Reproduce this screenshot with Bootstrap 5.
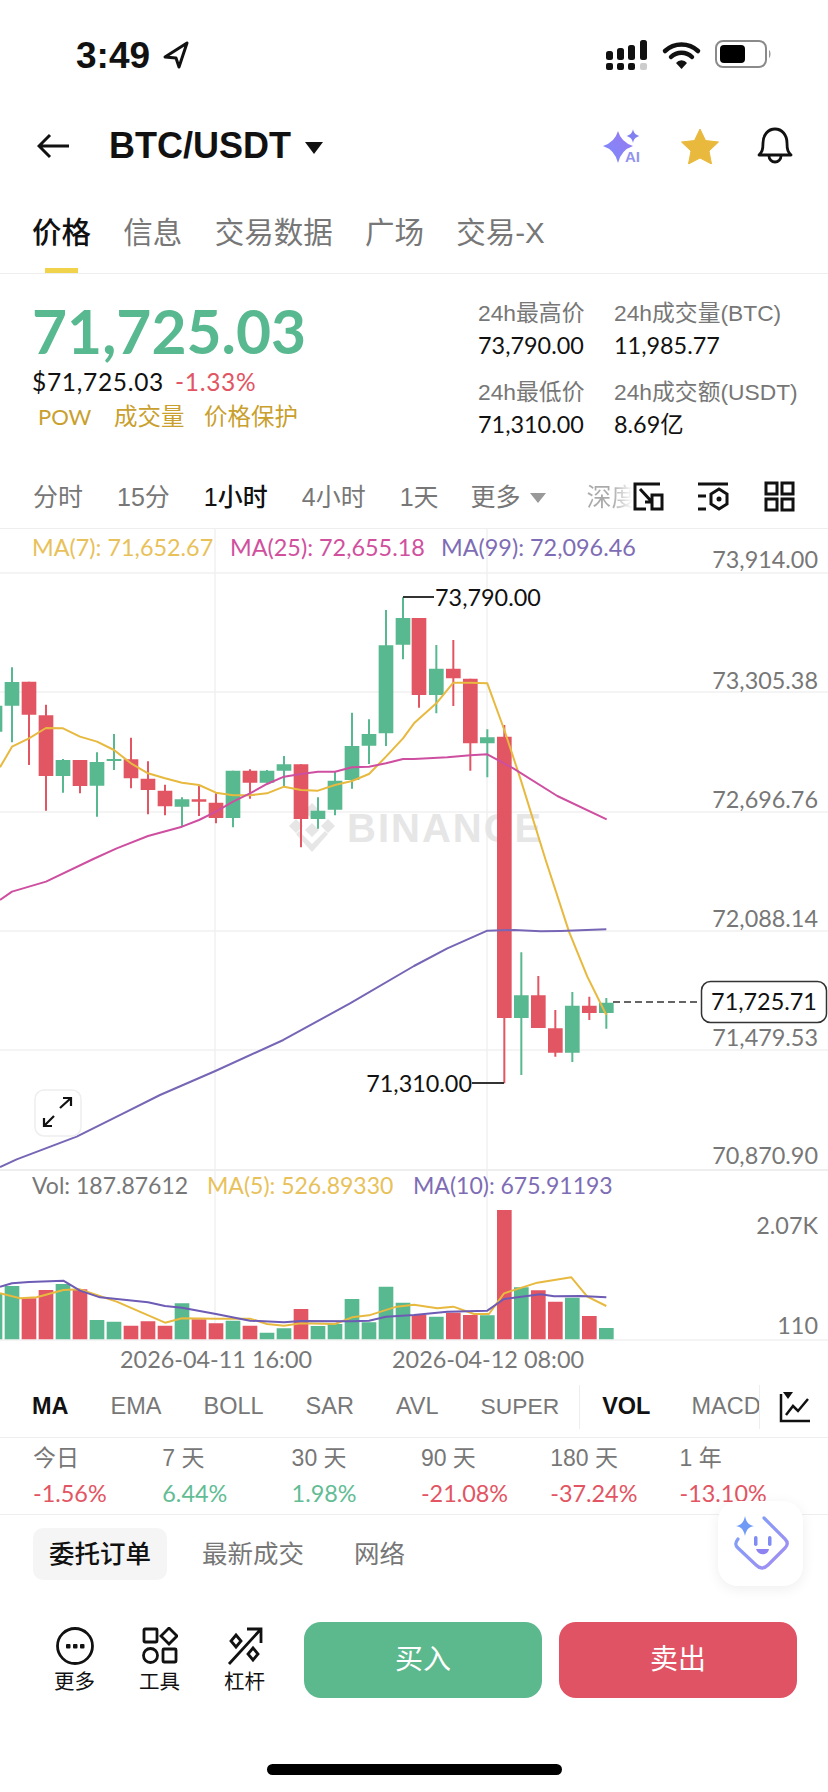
<!DOCTYPE html>
<html lang="zh-CN">
<head>
<meta charset="utf-8">
<title>BTC/USDT</title>
<link href="https://cdn.jsdelivr.net/npm/bootstrap@5.3.0/dist/css/bootstrap.min.css" rel="stylesheet">
<style>
html,body{margin:0;background:#fff}
body{font-family:"Liberation Sans","Noto Sans CJK SC",sans-serif;color:#111}
.phone{position:relative;width:828px;height:1792px;overflow:hidden;background:#fff}
.num{font-family:Lato,"Noto Sans CJK SC",sans-serif}
.sbar{height:110px;padding:0 57px 0 76px}
.clock{font-size:37px;font-weight:700;line-height:1;font-family:"Liberation Sans",sans-serif}
.locarrow{margin-left:12px}
.topbar{height:72px;padding:0 35px 0 37px}
.pair{font-size:36px;font-weight:700;line-height:1;margin-left:40px}
.caret{margin:4px 0 0 13px}
.mtabs{height:92px;padding:31px 0 0 32px;gap:32.300px;border-bottom:1px solid #eee}
.mtab{position:relative;font-size:29.500px;line-height:40px;color:#777}
.mtab.on{color:#111;font-weight:500}
.mtab.on::after{content:"";position:absolute;left:13px;width:33px;height:5px;bottom:0;background:#F0D24B}
.summ{height:178px;padding:0 0 0 33px}
.bigp{font-size:60.500px;font-weight:700;line-height:58px;color:#58B88F;margin:28px 0 0 -1px}
.subp{font-size:24.500px;line-height:30px;margin-top:7px;letter-spacing:.7px;margin-left:-1px}
.dn{color:#E25563}
.up{color:#62BC94}
.tags{font-size:23.500px;line-height:30px;margin-top:5px;padding-left:5px;color:#C99F2E}
.tag1{font-size:22px;width:76px}
.tag2{width:90px}
.stats{margin-left:auto;width:350px;padding-top:24px}
.stats>div{flex:0 0 auto}
.c1{width:136px}
.lbl{font-size:22.800px;line-height:30px;color:#777;white-space:nowrap}
.val{font-size:23.400px;line-height:30px;color:#111;margin-top:2px;white-space:nowrap}
.lbl.r2{margin-top:17px}
.ivals{height:77px;padding:27px 0 0 33px;border-bottom:1px solid #eee;position:relative}
.ivs{gap:34px;font-size:25px;line-height:36px;color:#777;width:606px;overflow:hidden;white-space:nowrap}
.ivs .on{color:#111;font-weight:500}
.more{margin-left:-2px}
.fadetxt{background:linear-gradient(90deg,#aaa 50%,#fff 92%);-webkit-background-clip:text;background-clip:text;color:transparent;margin-left:7px}
.tri{display:inline-block;width:0;height:0;border-left:8px solid transparent;border-right:8px solid transparent;border-top:10px solid #999;margin:0 0 3px 9px}
.ivic{position:absolute;left:0;top:0;width:828px;height:77px;pointer-events:none}
.chart{display:block;width:828px;height:843px}
.chart text{font-family:Lato,"Noto Sans CJK SC",sans-serif;font-size:23.400px}
.chart .volleg text{font-size:23px}
.inds{height:66px;padding:4px 0 0 32px;border-bottom:1px solid #eee;font-size:23.500px;color:#777;white-space:nowrap}
.inds b{color:#111;font-weight:700}
.igrp{gap:42px}
.sup{font-size:22.800px}
.ivs2{width:68px;overflow:hidden;margin-left:41px}
.vsep{width:1px;height:44px;background:#eee}
.vsep.first{margin:0 22px 0 20px}
.iconsel{margin-left:19px}
.perf{height:77px;padding:5px 0 0 33px;border-bottom:1px solid #eee}
.perf>div{width:129.300px}
.plbl{font-size:23px;line-height:30px;color:#777}
.pval{font-size:23.400px;line-height:30px;margin-top:5px}
.ttabs{padding:13px 0 0 33px;gap:35px}
.ttab{font-size:25.500px;line-height:52px;color:#777}
.ttab.on{background:#F5F5F5;color:#111;border-radius:10px;padding:0 16px;font-weight:500}
.ttab.net{margin-left:15px}
.bott{margin-top:42px;height:76px}
.tool{width:85px;font-size:20.500px;line-height:26px;color:#111;text-align:center}
.tool svg{display:block;margin:5px auto 4px}
.tools{padding-left:32px;width:304px}
.act{width:238px;height:76px;border:0;border-radius:17px;color:#fff;font-size:28px;padding:0;line-height:1}
.act.buy{background:#5CB88D}
.act.sell{background:#E05364;margin-left:17px}
.act.buy:hover{background:#5CB88D;color:#fff}
.act.sell:hover{background:#E05364;color:#fff}
.hbar{width:295px;height:11px;border-radius:6px;background:#000;margin:66px 0 0 267px}
.aibtn{position:absolute;left:718px;top:1501px;width:85px;height:85px;border-radius:20px;background:#fff;box-shadow:0 3px 14px rgba(0,0,0,.07)}
</style>
</head>
<body>
<div class="phone d-flex flex-column">

<div class="sbar d-flex align-items-center">
  <span class="clock">3:49</span>
  <svg class="locarrow" width="30" height="30" viewBox="0 0 30 30"><path d="M25 3 3 17l11 1 3 9z" fill="none" stroke="#111" stroke-width="3" stroke-linejoin="round"/></svg>
  <svg class="ms-auto" width="165" height="32" viewBox="0 0 165 32">
    <g fill="#111"><rect x="0" y="12" width="7" height="9" rx="2.500"/><rect x="11" y="9" width="7" height="12" rx="2.500"/><rect x="22" y="6" width="7" height="15" rx="2.500"/><rect x="34" y="1" width="7" height="20" rx="2.500"/>
    <rect x="0" y="24" width="7" height="7" rx="2"/><rect x="11" y="24" width="7" height="7" rx="2"/><rect x="22" y="24" width="7" height="7" rx="2"/></g><rect x="34" y="24" width="7" height="7" rx="2" fill="#ccc"/>
    <path d="M59 12a24 24 0 0 1 33 0M65 18a15 15 0 0 1 21 0" fill="none" stroke="#111" stroke-width="4.500" stroke-linecap="round"/><path d="M70 24a7 7 0 0 1 11 0l-5.500 6z" fill="#111"/>
    <rect x="110" y="2" width="50" height="26" rx="7" fill="none" stroke="#8a8a8a" stroke-width="2"/><rect x="114" y="6" width="25" height="18" rx="4" fill="#000"/><path d="M163 11c2 1 2 7 0 8z" fill="#999"/>
  </svg>
</div>

<div class="topbar d-flex align-items-center">
  <svg width="32" height="26" viewBox="0 0 32 26"><path d="M32 13H2M13 2 2 13l11 11" fill="none" stroke="#111" stroke-width="3"/></svg>
  <span class="pair">BTC/USDT</span>
  <svg class="caret" width="20" height="14" viewBox="0 0 20 14"><path d="M1 1h18l-9 12z" fill="#111"/></svg>
  <svg class="ms-auto" width="40" height="36" viewBox="0 0 40 36"><defs><linearGradient id="g1" x1="0" y1="1" x2="1" y2="0"><stop offset="0" stop-color="#7A8CFB"/><stop offset="1" stop-color="#9A78F0"/></linearGradient></defs>
    <path d="M15 3Q18 14 30 18 18 22 15 35 12 22 0 18 12 14 15 3z" fill="url(#g1)"/><path d="M30 1c.8 4 2.200 5.500 6.500 7-4.300 1.500-5.700 3-6.500 7-.8-4-2.200-5.500-6.500-7 4.300-1.500 5.700-3 6.500-7z" fill="#8080F0"/>
    <text x="22" y="34" font-size="15" font-weight="700" fill="#9393EE" font-family="Liberation Sans">AI</text></svg>
  <svg style="margin-left:38px" width="38" height="36" viewBox="0 0 38 36"><path d="M19 1l5.500 11.500 13 1.500-9.500 9 2.500 13L19 30 7.500 36 10 23 .5 14l13-1.500z" fill="#E9B93D" stroke="#E9B93D" stroke-linejoin="round"/></svg>
  <svg style="margin-left:38px" width="36" height="38" viewBox="0 0 36 38"><path d="M2 28c3-3 4-5 4-12C6 8 11 2 18 2s12 6 12 14c0 7 1 9 4 12z" fill="none" stroke="#111" stroke-width="2.800" stroke-linejoin="round"/><path d="M12 29a6 6 0 0 0 12 0" fill="none" stroke="#111" stroke-width="2.800"/></svg>
</div>

<div class="mtabs d-flex">
  <span class="mtab on">价格</span><span class="mtab">信息</span><span class="mtab">交易数据</span><span class="mtab">广场</span><span class="mtab">交易-X</span>
</div>

<div class="summ d-flex">
  <div>
    <div class="bigp num">71,725.03</div>
    <div class="subp num"><span>$71,725.03</span> <span class="dn ms-1">-1.33%</span></div>
    <div class="tags d-flex"><span class="num tag1">POW</span><span class="tag2">成交量</span><span>价格保护</span></div>
  </div>
  <div class="stats d-flex">
    <div class="c1">
      <div class="lbl">24h最高价</div><div class="val num">73,790.00</div>
      <div class="lbl r2">24h最低价</div><div class="val num">71,310.00</div>
    </div>
    <div>
      <div class="lbl">24h成交量(BTC)</div><div class="val num">11,985.77</div>
      <div class="lbl r2">24h成交额(USDT)</div><div class="val num">8.69亿</div>
    </div>
  </div>
</div>

<div class="ivals">
  <div class="ivs d-flex">
    <span>分时</span><span>15分</span><span class="on">1小时</span><span>4小时</span><span>1天</span><span class="more">更多<i class="tri"></i></span><span class="fadetxt">深度</span>
  </div>
  <svg class="ivic" viewBox="0 452 828 77">
    <g fill="none" stroke="#111" stroke-width="3">
      <path d="M660 484H635V509H646M652 509h10V495h-10zM640 489l12 13M645 502h7V495"/>
      <path d="M698 484h30M698 496h8M698 509h8M719 489l8 5v10l-8 5-8-5v-10z"/>
      <rect x="766" y="483" width="11" height="11"/><rect x="782" y="483" width="11" height="11"/><rect x="766" y="499" width="11" height="11"/><rect x="782" y="499" width="11" height="11"/>
    </g>
    <circle cx="719" cy="499" r="2.500" fill="#111"/>
  </svg>
</div>

<svg class="chart" viewBox="0 529 828 843" xmlns="http://www.w3.org/2000/svg">
  <g stroke="#F1F1F1" stroke-width="1.500" fill="none">
    <path d="M0 573H828M0 692H828M0 812H828M0 931H828M0 1050H828M215 529V1340M487 529V1340"/>
  </g>
  <path d="M0 1170H828" stroke="#eee" stroke-width="2"/>
  <path d="M0 1340H828" stroke="#F1F1F1" stroke-width="1.500"/>

  <!-- watermark -->
  <g fill="#E6E6E6">
    <path d="M312 803l8 8-8 8-8-8zM296 819l7 7-7 7-7-7zM328 819l7 7-7 7-7-7zM312 823l7 7-7 7-7-7zM296 834l3-3 13 13 13-13 3 3-16 18z"/>
    <text x="347" y="842" style="font-family:'Liberation Sans';font-size:40px;font-weight:700;letter-spacing:2px">BINANCE</text>
  </g>

  <g transform="translate(0 560) scale(.33333)" fill="none">
    <path stroke="#58B88F" stroke-width="6" d="M36 322V547M189 597V698M291 577V770M342 522V630M546 712V800M699 632V802M801 630V668M852 588V680M954 712V806M1005 635V766M1056 458V686M1107 478V612M1158 150V558M1209 112V298M1309 255V460M1462 508V652M1564 1177V1545M1717 1296V1506M1819 1314V1406"/>
    <path stroke="#E25563" stroke-width="6" d="M87 365V615M138 434V752M240 600V700M393 533V685M444 604V763M495 674V766M597 678V768M648 700V790M750 628V716M903 613V862M1257 174V443M1360 240V438M1411 356V632M1513 495V1570M1615 1248V1404M1666 1350V1490M1768 1310V1380"/>
    <path stroke="#58B88F" stroke-width="44" d="M-15 437V515M36 366V437M189 600V648M291 606V677M342 597V603M546 718V740M699 632V774M801 632V668M852 613V632M954 752V777M1005 662V749M1056 558V660M1107 522V557M1158 256V520M1209 174V254M1309 326V405M1462 532V550M1564 1306V1374M1717 1337V1478M1819 1328V1359"/>
    <path stroke="#E25563" stroke-width="44" d="M87 365V464M138 466V648M240 600V678M393 598V655M444 656V690M495 692V739M597 718V725M648 728V774M750 632V668M903 613V777M1257 174V405M1360 326V355M1411 356V550M1513 530V1374M1615 1306V1404M1666 1405V1478M1768 1337V1359"/>
    <path stroke="#E8B93F" stroke-width="6" stroke-linejoin="round" d="M0 622L36 560 87 535 138 504 189 505 240 530 291 545 342 570 393 610 444 640 495 655 546 668 597 675 648 698 699 706 750 706 801 700 852 680 903 690 954 692 1005 675 1056 663 1107 642 1158 590 1209 535 1242 490 1309 430 1360 368 1411 368 1462 370 1513 510 1564 665 1637 900 1707 1115 1762 1250 1819 1365"/>
    <path stroke="#CE4FA0" stroke-width="6" stroke-linejoin="round" d="M0 1020L36 995 138 965 280 897 350 865 444 828 546 800 597 780 648 755 699 725 750 700 801 672 852 650 903 642 954 635 1005 635 1056 622 1107 620 1158 610 1209 597 1242 597 1342 592 1411 586 1462 583 1540 625 1672 708 1820 778"/>
    <path stroke="#7765B5" stroke-width="6" stroke-linejoin="round" d="M0 1821L50 1798 230 1730 370 1660 480 1605 646 1533 850 1440 1050 1330 1242 1218 1342 1165 1462 1112 1542 1110 1622 1114 1682 1113 1819 1108"/>
  </g>

  <path d="M403 597H434M504 1083H472" stroke="#333" stroke-width="2" fill="none"/>
  <text x="435" y="606" fill="#111">73,790.00</text>
  <text x="472" y="1092" text-anchor="end" fill="#111">71,310.00</text>

  <path d="M613 1002H701" stroke="#333" stroke-width="1.500" stroke-dasharray="7 4"/>
  <rect x="701.500" y="981.500" width="125" height="41" rx="9" fill="#fff" stroke="#333" stroke-width="1.500"/>
  <text x="764" y="1010" text-anchor="middle" fill="#111">71,725.71</text>

  <!-- legends -->
  <g>
    <text x="32" y="556" fill="#E8C15A">MA(7): 71,652.67</text>
    <text x="230" y="556" fill="#D0509E">MA(25): 72,655.18</text>
    <text x="441" y="556" fill="#7E6DB4">MA(99): 72,096.46</text>
  </g>
  <g text-anchor="end" fill="#777">
    <text x="818" y="568">73,914.00</text>
    <text x="818" y="689">73,305.38</text>
    <text x="818" y="808">72,696.76</text>
    <text x="818" y="927">72,088.14</text>
    <text x="818" y="1046">71,479.53</text>
    <text x="818" y="1164">70,870.90</text>
    <text x="818" y="1234">2.07K</text>
    <text x="818" y="1334">110</text>
  </g>

  <!-- expand button -->
  <rect x="35" y="1090" width="46" height="46" rx="9" fill="#fff" stroke="#EEE" stroke-width="1.500"/>
  <path d="M60 1108L71 1098M63 1098H71V1106M54 1116L44 1126M44 1118V1126H52" fill="none" stroke="#111" stroke-width="2.200"/>

  <!-- volume -->
  <g class="volleg">
    <text x="32" y="1194" fill="#777">Vol: 187.87612</text>
    <text x="207" y="1194" fill="#E8C15A">MA(5): 526.89330</text>
    <text x="413" y="1194" fill="#7E6DB4">MA(10): 675.91193</text>
  </g>
  <g transform="translate(0 1160) scale(.33333)" fill="none">
    <path stroke="#58B88F" stroke-width="44" d="M-15 400V538M36 378V538M189 372V538M291 480V538M342 485V538M546 430V538M699 482V538M801 518V538M852 505V538M954 498V538M1005 492V538M1056 417V538M1107 487V538M1158 380V538M1209 428V538M1309 470V538M1462 466V538M1564 382V538M1717 413V538M1819 504V538"/>
    <path stroke="#E25563" stroke-width="44" d="M87 415V538M138 390V538M240 388V538M393 497V538M444 484V538M495 497V538M597 478V538M648 490V538M750 497V538M903 447V538M1257 465V538M1360 458V538M1411 465V538M1513 150V538M1615 391V538M1666 425V538M1768 468V538"/>
    <path stroke="#E8B93F" stroke-width="6" stroke-linejoin="round" d="M0 400L60 415 110 412 190 390 240 388 290 405 350 425 495 488 546 475 648 476 750 476 801 492 852 497 903 490 1005 492 1056 472 1107 466 1190 440 1242 434 1312 445 1360 440 1422 462 1467 462 1512 400 1612 368 1714 352 1762 410 1819 438"/>
    <path stroke="#6D5BB5" stroke-width="6" stroke-linejoin="round" d="M0 380L36 370 87 366 190 362 240 392 300 412 444 427 495 438 546 443 648 462 750 482 852 487 903 483 1056 484 1107 482 1158 470 1242 465 1342 455 1462 452 1512 417 1622 403 1662 409 1742 408 1819 412"/>
  </g>
  <g fill="#777">
    <text x="120" y="1368">2026-04-11 16:00</text>
    <text x="392" y="1368">2026-04-12 08:00</text>
  </g>
</svg>

<div class="inds d-flex align-items-center">
  <div class="igrp d-flex"><b>MA</b><span>EMA</span><span>BOLL</span><span>SAR</span><span>AVL</span><span class="sup">SUPER</span></div>
  <i class="vsep first"></i>
  <b>VOL</b>
  <span class="ivs2">MACD</span>
  <i class="vsep"></i>
  <svg class="iconsel" width="31" height="32" viewBox="0 0 31 32"><path d="M2 3V30H31" fill="none" stroke="#111" stroke-width="2.500"/><path d="M7 24l7-9 5 5L29 8" fill="none" stroke="#111" stroke-width="2.500"/><path d="M4 1h10l-5 7z" fill="#111"/></svg>
</div>

<div class="perf d-flex">
  <div><div class="plbl">今日</div><div class="pval dn num">-1.56%</div></div>
  <div><div class="plbl">7 天</div><div class="pval up num">6.44%</div></div>
  <div><div class="plbl">30 天</div><div class="pval up num">1.98%</div></div>
  <div><div class="plbl">90 天</div><div class="pval dn num">-21.08%</div></div>
  <div><div class="plbl">180 天</div><div class="pval dn num">-37.24%</div></div>
  <div><div class="plbl">1 年</div><div class="pval dn num">-13.10%</div></div>
</div>

<div class="ttabs d-flex">
  <span class="ttab on">委托订单</span><span class="ttab">最新成交</span><span class="ttab net">网络</span>
</div>

<div class="bott d-flex">
  <div class="tools d-flex">
    <div class="tool"><svg width="38" height="38" viewBox="0 0 38 38"><circle cx="19" cy="19" r="17.500" fill="none" stroke="#111" stroke-width="2.800"/><g fill="#111"><rect x="10" y="17" width="4.500" height="4.500" rx="1"/><rect x="17" y="17" width="4.500" height="4.500" rx="1"/><rect x="24" y="17" width="4.500" height="4.500" rx="1"/></g></svg>更多</div>
    <div class="tool"><svg width="36" height="38" viewBox="0 0 36 38"><g fill="none" stroke="#111" stroke-width="2.800"><rect x="2" y="2" width="13" height="13" rx="1"/><path d="M27 1l8 8-8 8-8-8z"/><circle cx="8.500" cy="28.500" r="7"/><rect x="21" y="22" width="13" height="13" rx="1"/></g></svg>工具</div>
    <div class="tool"><svg width="36" height="38" viewBox="0 0 36 38"><g fill="none" stroke="#111" stroke-width="2.800"><path d="M2 37 34 2M20 2H34V16"/><path d="M9 8l5 6-5 6-5-6zM26 21l5 6-5 6-5-6z"/></g></svg>杠杆</div>
  </div>
  <button class="btn act buy" type="button">买入</button>
  <button class="btn act sell" type="button">卖出</button>
</div>

<div class="hbar"></div>

<div class="aibtn d-flex align-items-center justify-content-center">
  <svg width="57" height="57" viewBox="0 0 57 57">
    <defs><linearGradient id="g2" x1="0" y1="0" x2="1" y2="1"><stop offset="0" stop-color="#7AA2F8"/><stop offset="1" stop-color="#A58CF2"/></linearGradient></defs>
    <path d="M32 3l21 21c3 3 3 6 0 9L36 50c-4 4-8 4-12 0L6 33c-3-3-3-5 0-9" fill="none" stroke="url(#g2)" stroke-width="3.200" stroke-linecap="round"/>
    <path d="M13 1c1.500 7 4 9 9 10-5 1-7.500 3-9 10-1.500-7-4-9-9-10 5-1 7.500-3 9-10z" fill="#6F9BF6"/>
    <rect x="22" y="21" width="3.500" height="10" rx="1.700" fill="#7F8CF5"/><rect x="36" y="21" width="3.500" height="10" rx="1.700" fill="#7F8CF5"/><path d="M24 34h13c-1 7-11 7-13 0z" fill="#8E82F2"/>
  </svg>
</div>

</div>
<script src="https://cdn.jsdelivr.net/npm/bootstrap@5.3.0/dist/js/bootstrap.bundle.min.js"></script>
</body>
</html>
